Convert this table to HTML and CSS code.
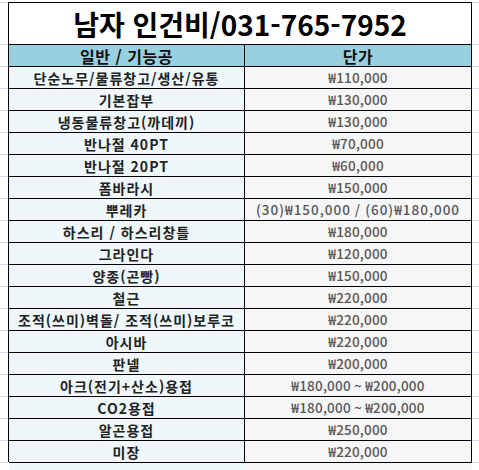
FILE: index.html
```html
<!DOCTYPE html>
<html lang="ko">
<head>
<meta charset="utf-8">
<link rel="stylesheet" href="styles.css">
</head>
<body>
<div class="sheet">
  <div class="row title-row"><div class="gut"></div><div class="title">남자 인건비/031-765-7952</div><div class="gut gut-r"></div></div>
  <div class="row head"><div class="gut"></div><div class="c1">일반 / 기능공</div><div class="c2">단가</div><div class="gut gut-r"></div></div>
  <div class="row"><div class="gut"></div><div class="c1">단순노무/물류창고/생산/유통</div><div class="c2">₩110,000</div><div class="gut gut-r"></div></div>
  <div class="row"><div class="gut"></div><div class="c1">기본잡부</div><div class="c2">₩130,000</div><div class="gut gut-r"></div></div>
  <div class="row"><div class="gut"></div><div class="c1">냉동물류창고(까데끼)</div><div class="c2">₩130,000</div><div class="gut gut-r"></div></div>
  <div class="row"><div class="gut"></div><div class="c1">반나절 40PT</div><div class="c2">₩70,000</div><div class="gut gut-r"></div></div>
  <div class="row"><div class="gut"></div><div class="c1">반나절 20PT</div><div class="c2">₩60,000</div><div class="gut gut-r"></div></div>
  <div class="row"><div class="gut"></div><div class="c1">폼바라시</div><div class="c2">₩150,000</div><div class="gut gut-r"></div></div>
  <div class="row"><div class="gut"></div><div class="c1">뿌레카</div><div class="c2 wide">(30)₩150,000 / (60)₩180,000</div><div class="gut gut-r"></div></div>
  <div class="row"><div class="gut"></div><div class="c1">하스리 / 하스리창틀</div><div class="c2">₩180,000</div><div class="gut gut-r"></div></div>
  <div class="row"><div class="gut"></div><div class="c1">그라인다</div><div class="c2">₩120,000</div><div class="gut gut-r"></div></div>
  <div class="row"><div class="gut"></div><div class="c1">양종(곤빵)</div><div class="c2">₩150,000</div><div class="gut gut-r"></div></div>
  <div class="row"><div class="gut"></div><div class="c1">철근</div><div class="c2">₩220,000</div><div class="gut gut-r"></div></div>
  <div class="row"><div class="gut"></div><div class="c1">조적(쓰미)벽돌/ 조적(쓰미)보루코</div><div class="c2">₩220,000</div><div class="gut gut-r"></div></div>
  <div class="row"><div class="gut"></div><div class="c1">아시바</div><div class="c2">₩220,000</div><div class="gut gut-r"></div></div>
  <div class="row"><div class="gut"></div><div class="c1">판넬</div><div class="c2">₩200,000</div><div class="gut gut-r"></div></div>
  <div class="row"><div class="gut"></div><div class="c1">아크(전기+산소)용접</div><div class="c2">₩180,000 ~ ₩200,000</div><div class="gut gut-r"></div></div>
  <div class="row"><div class="gut"></div><div class="c1">CO2용접</div><div class="c2">₩180,000 ~ ₩200,000</div><div class="gut gut-r"></div></div>
  <div class="row"><div class="gut"></div><div class="c1">알곤용접</div><div class="c2">₩250,000</div><div class="gut gut-r"></div></div>
  <div class="row"><div class="gut"></div><div class="c1">미장</div><div class="c2">₩220,000</div><div class="gut gut-r"></div></div>
  <div class="row tail"><div class="gut"></div><div class="c1"></div><div class="c2"></div><div class="gut gut-r"></div></div>
</div>
</body>
</html>
```
FILE: styles.css
```css
* { box-sizing: border-box; }
html, body { margin: 0; padding: 0; background: #fff; }
body {
  padding-top: 2px;
  font-family: "Noto Sans CJK KR", "Noto Sans", sans-serif;
  overflow: hidden;
}
.sheet { width: 479px; }
.row { display: flex; height: 22px; }
.gut { width: 8px; flex: none; border-top: 1px solid #d5dbe8; }
.gut-r { flex: 1; width: auto; }
.c1, .c2 {
  border-top: 1px solid #000;
  border-left: 1px solid #000;
  display: flex;
  align-items: center;
  justify-content: center;
  white-space: nowrap;
  line-height: 1;
}
.c1 {
  width: 236px;
  background: #eff7fb;
  color: #222;
  font-size: 14px;
  font-weight: 700;
  letter-spacing: 1px;
}
.c2 {
  width: 228px;
  border-right: 1px solid #000;
  background: #f5f6f8;
  color: #555;
  font-size: 13.5px;
  font-weight: 500;
  letter-spacing: 0.2px;
}
.c2.wide { letter-spacing: 1px; }
.title-row { height: 42px; }
.title {
  width: 464px;
  border: 1px solid #000;
  border-bottom: 0;
  background: #fff;
  display: flex;
  align-items: center;
  justify-content: center;
  font-size: 28px;
  font-weight: 700;
  color: #000;
  line-height: 1;
  padding-top: 1px;
}
.head .c1, .head .c2 {
  background: #99d0e0;
  color: #111;
  font-size: 16px;
  font-weight: 700;
  letter-spacing: 0.5px;
}
.tail { height: 10px; }
.tail .c1 { border-left: 0; margin-left: 1px; width: 235px; }
.tail .c2 { border-left: 0; border-right: 0; }
```
